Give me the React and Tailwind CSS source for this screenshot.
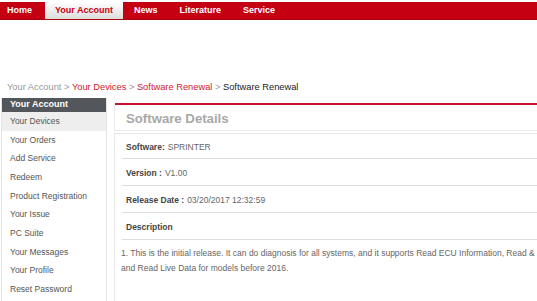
const tabs = ['Home', 'Your Account', 'News', 'Literature', 'Service']

const menu = [
  'Your Devices',
  'Your Orders',
  'Add Service',
  'Redeem',
  'Product Registration',
  'Your Issue',
  'PC Suite',
  'Your Messages',
  'Your Profile',
  'Reset Password',
]

const details = [
  { label: 'Software:', value: 'SPRINTER' },
  { label: 'Version :', value: 'V1.00' },
  { label: 'Release Date :', value: '03/20/2017 12:32:59' },
  { label: 'Description', value: '' },
]

export default function App() {
  return (
    <div className="w-[537px] h-[301px] overflow-hidden bg-white font-['Liberation_Sans',Arial,sans-serif]">
      {/* Top nav */}
      <nav className="mt-[2px] h-[18px] flex bg-[#c40012] text-[9px] font-bold text-white border-b border-[#a8000f]">
        {tabs.map((t, i) =>
          t === 'Your Account' ? (
            <a key={t} className="ml-[2px] px-[10px] flex items-center bg-gradient-to-b from-white to-[#dcdcdc] text-[#c40012]">
              {t}
            </a>
          ) : (
            <a key={t} className={`flex items-center ${i === 0 ? 'ml-[1px] pl-[6px] pr-[11px]' : 'px-[11px]'}`}>
              {t}
            </a>
          )
        )}
      </nav>

      {/* Breadcrumb */}
      <div className="mt-[61px] pl-[7px] h-[12px] leading-[12px] text-[9.3px] text-[#999] whitespace-nowrap">
        Your Account &gt; <span className="text-[#d0202e]">Your Devices</span> &gt;{' '}
        <span className="text-[#d0202e]">Software Renewal</span> &gt;{' '}
        <span className="text-[#222]">Software Renewal</span>
      </div>

      <div className="mt-[5px] flex w-[720px]">
        {/* Sidebar */}
        <aside className="ml-[1px] w-[106px] shrink-0 border-l border-r border-[#e4e4e4] h-[210px]">
          <div className="h-[14px] bg-[#53575b] pl-[8px] flex items-center text-[9px] font-bold text-white">
            Your Account
          </div>
          {menu.map((m, i) => (
            <div
              key={m}
              className={`h-[18.67px] pl-[8px] flex items-center text-[8.5px] text-[#555] ${i === 0 ? 'bg-[#eeeeee]' : ''}`}
            >
              {m}
            </div>
          ))}
        </aside>

        {/* Main */}
        <main className="ml-[7px] flex-1 pt-[5px]">
          <div className="h-[2px] bg-[#c8102e] ml-[1px]" />
          <div className="h-[26px] pt-[2px] border-l border-b border-[#ececec] flex items-center pl-[11px] text-[13.2px] font-bold text-[#a8a8a8]">
            Software Details
          </div>
          <div className="mt-[2px] border-l border-t border-[#e6e6e6] h-[200px]">
            {details.map((d, i) => (
              <div
                key={d.label}
                className={`ml-[7px] border-b border-[#dedede] flex items-center pl-[4px] text-[8.5px] text-[#666] ${i === 0 ? 'h-[25px] pt-[2px]' : 'h-[27px] pt-[3px]'}`}
              >
                <span className="font-bold text-[#444]">{d.label}</span>
                {d.value && <span className="ml-[3px]">{d.value}</span>}
              </div>
            ))}
            <div className="pt-[6px] pl-[6px] text-[8.5px] leading-[15.4px] text-[#666] whitespace-nowrap">
              1. This is the initial release. It can do diagnosis for all systems, and it supports Read ECU Information, Read &amp; Clear DTCs
              <br />
              and Read Live Data for models before 2016.
            </div>
          </div>
        </main>
      </div>
    </div>
  )
}
